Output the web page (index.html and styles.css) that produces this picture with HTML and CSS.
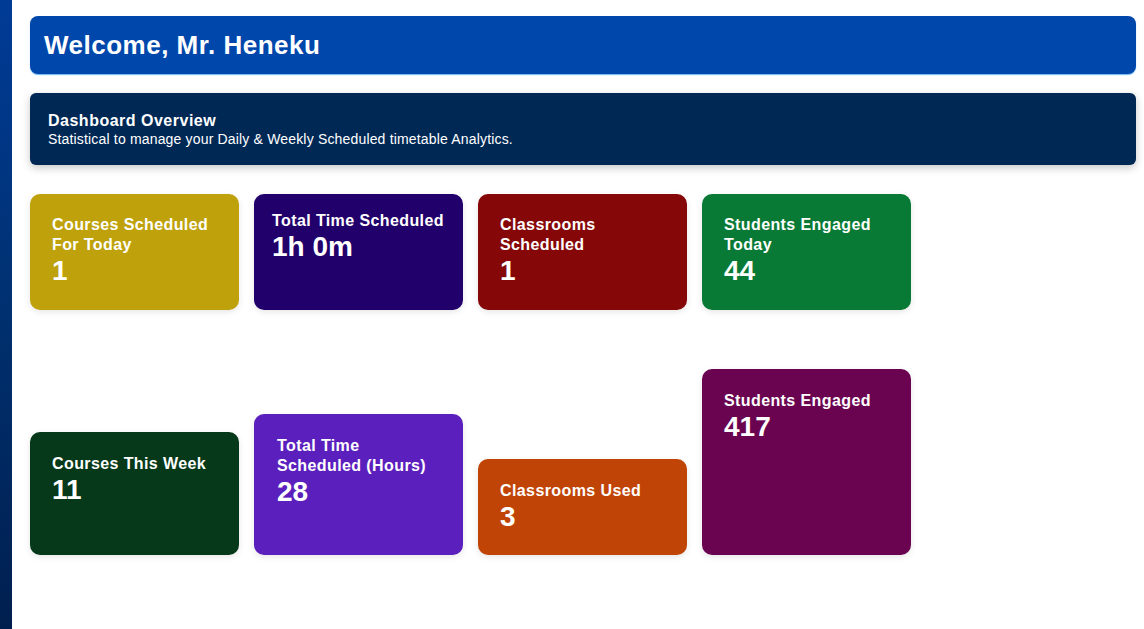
FILE: index.html
```html
<!DOCTYPE html>
<html lang="en">
<head>
<meta charset="utf-8">
<title>Dashboard</title>
<link rel="stylesheet" href="styles.css">
</head>
<body>
<div class="layout">
  <aside class="sidebar"></aside>
  <main class="main">
    <header class="welcome">
      <h1>Welcome, Mr. Heneku</h1>
    </header>
    <section class="overview">
      <h2>Dashboard Overview</h2>
      <p>Statistical to manage your Daily &amp; Weekly Scheduled timetable Analytics.</p>
    </section>
    <section class="row row-daily">
      <div class="card c-gold">
        <div class="card-title">Courses Scheduled For Today</div>
        <div class="card-value">1</div>
      </div>
      <div class="card c-indigo tight">
        <div class="card-title">Total Time Scheduled</div>
        <div class="card-value">1h 0m</div>
      </div>
      <div class="card c-maroon">
        <div class="card-title">Classrooms Scheduled</div>
        <div class="card-value">1</div>
      </div>
      <div class="card c-green">
        <div class="card-title">Students Engaged Today</div>
        <div class="card-value">44</div>
      </div>
    </section>
    <section class="row row-weekly">
      <div class="card c-forest wk" style="height:123px">
        <div class="card-title">Courses This Week</div>
        <div class="card-value">11</div>
      </div>
      <div class="card c-violet wk wide" style="height:141px">
        <div class="card-title">Total Time Scheduled (Hours)</div>
        <div class="card-value">28</div>
      </div>
      <div class="card c-orange wk" style="height:96px">
        <div class="card-title">Classrooms Used</div>
        <div class="card-value">3</div>
      </div>
      <div class="card c-plum wk" style="height:186px">
        <div class="card-title">Students Engaged</div>
        <div class="card-value">417</div>
      </div>
    </section>
  </main>
</div>
</body>
</html>
```

FILE: styles.css
```css
* { box-sizing: border-box; }
html, body {
  margin: 0;
  padding: 0;
  height: 100%;
  background: #ffffff;
  font-family: "Liberation Sans", Arial, sans-serif;
  color: #ffffff;
}
.layout {
  display: flex;
  min-height: 100%;
}
.sidebar {
  width: 12px;
  flex: 0 0 12px;
  min-height: 629px;
  background: linear-gradient(180deg, #003b96 0%, #00306f 50%, #001f4f 100%);
}
.main {
  flex: 1;
  padding: 16px 8px 16px 18px;
}
.welcome {
  height: 58px;
  background: #0047ab;
  border-radius: 8px;
  padding: 0 14px;
  display: flex;
  align-items: center;
  box-shadow: 0 1px 1px rgba(40, 150, 240, 0.7);
}
.welcome h1 {
  margin: 0;
  font-size: 26px;
  font-weight: 700;
  line-height: 30px;
  letter-spacing: 0.5px;
}
.overview {
  margin-top: 19px;
  height: 72px;
  background: #002855;
  border-radius: 6px;
  padding: 18px 18px 0;
  box-shadow: 0 3px 8px rgba(0, 0, 0, 0.22);
}
.overview h2 {
  margin: 0;
  font-size: 16px;
  line-height: 19px;
  font-weight: 700;
  letter-spacing: 0.5px;
}
.overview p {
  margin: 1px 0 0;
  font-size: 14px;
  line-height: 16px;
  letter-spacing: 0.17px;
}
.row {
  display: flex;
  gap: 15px;
}
.row-daily {
  margin-top: 29px;
}
.row-weekly {
  margin-top: 59px;
  height: 186px;
  align-items: flex-end;
}
.card {
  width: 209px;
  flex: 0 0 209px;
  height: 116px;
  border-radius: 10px;
  padding: 21px 22px;
  box-shadow: 0 2px 6px rgba(0, 0, 0, 0.1);
}
.card.tight { padding: 17px 18px; }
.card.wk { padding: 22px 22px; }
.card.wk.wide { padding-left: 23px; padding-right: 23px; }
.card-title {
  font-size: 16px;
  font-weight: 700;
  line-height: 20px;
  letter-spacing: 0.4px;
}
.card-value {
  font-size: 28px;
  font-weight: 700;
  line-height: 32px;
}
.c-gold { background: #bea10b; }
.c-indigo { background: #22006b; }
.c-maroon { background: #850708; }
.c-green { background: #087a35; }
.c-forest { background: #06381a; }
.c-violet { background: #5b1fbd; }
.c-orange { background: #c04405; }
.c-plum { background: #6a0450; }
```
